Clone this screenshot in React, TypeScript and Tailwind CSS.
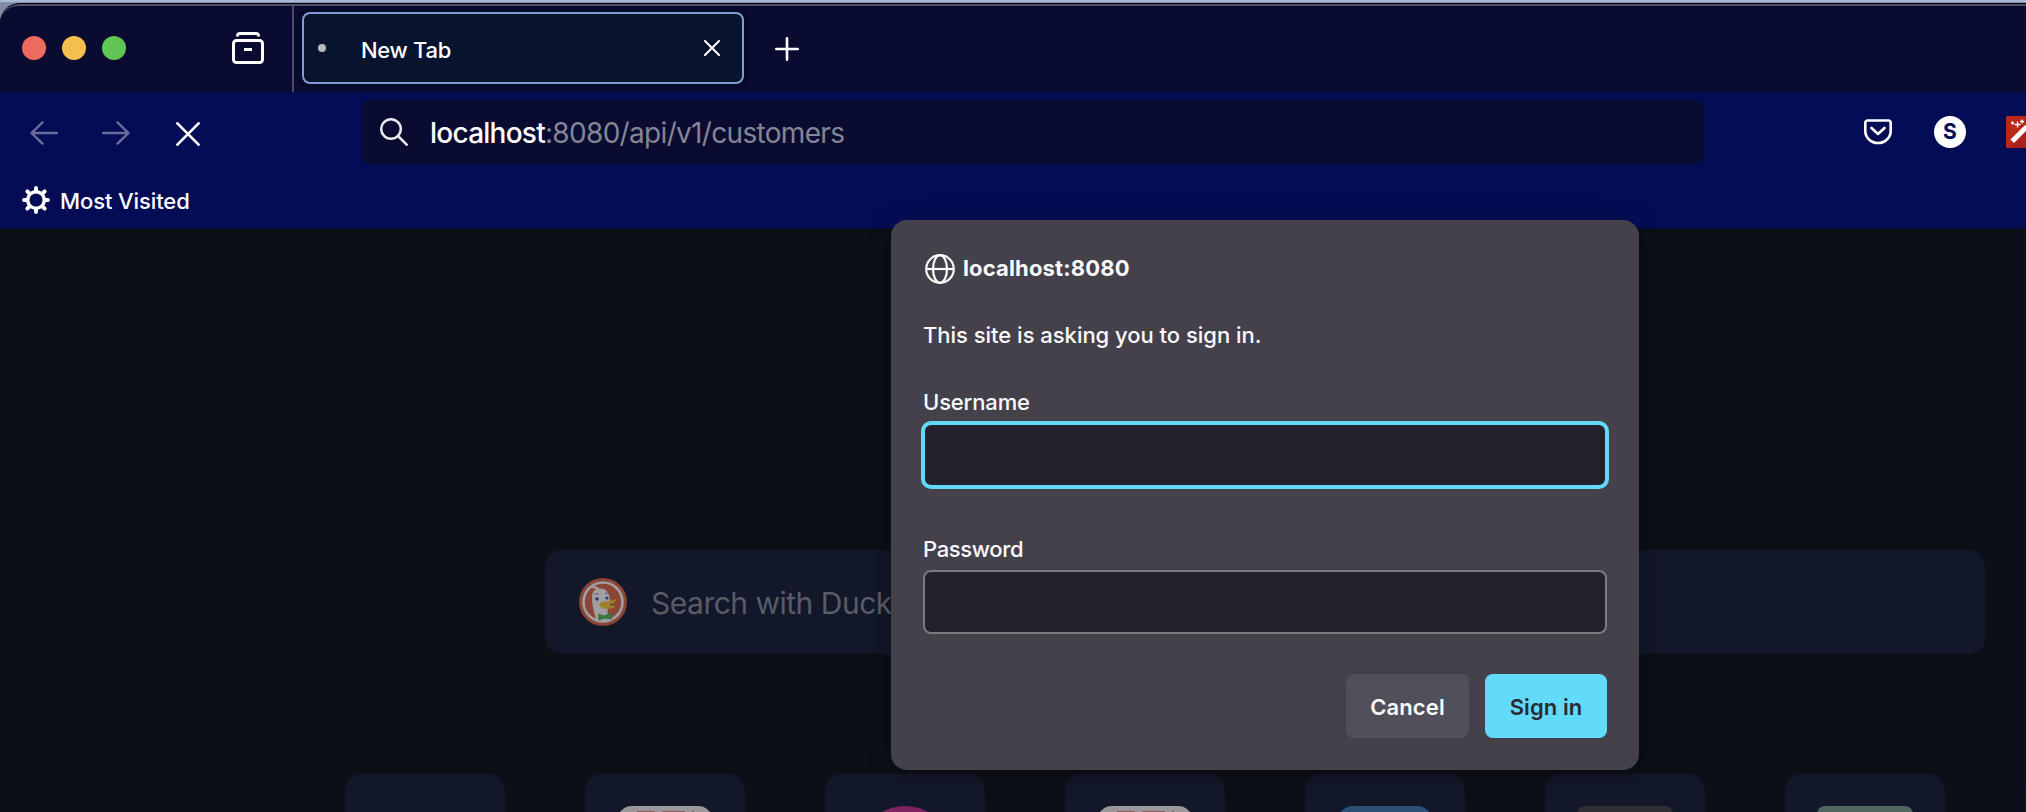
import React from "react";

const tiles = [
  { kind: "none" },
  { kind: "white" },
  { kind: "pink" },
  { kind: "white" },
  { kind: "blue" },
  { kind: "gray" },
  { kind: "green" },
  { kind: "none" },
];

function TileIcon({ kind }: { kind: string }) {
  if (kind === "pink") return <div className="size-24 rounded-full bg-[#7f2260]" />;
  if (kind === "blue") return <div className="size-24 rounded-[16px] bg-[#2b4f75]" />;
  if (kind === "gray") return <div className="size-24 rounded-lg bg-[#303034]" />;
  if (kind === "green") return <div className="size-24 rounded-lg bg-[#526660]" />;
  if (kind === "white")
    return (
      <div className="flex size-24 justify-center gap-[7px] overflow-hidden rounded-[15px] bg-[#999799] pt-[5px]">
        <div className="h-4 w-[18px] bg-[#8c5e5a]" />
        <div className="h-4 w-[23px] bg-[#8c5e5a]" />
        <div className="h-4 w-[2px] bg-[#8c5e5a]" />
      </div>
    );
  return null;
}

function Archive() {
  return (
    <svg className="h-8 w-8" viewBox="0 0 32 32" fill="none" stroke="#fff" strokeWidth="3" strokeLinecap="round">
      <path d="M5.500 3.200C5.700 2 6.500 1.500 8 1.500h16c1.500 0 2.300.5 2.500 1.700" />
      <rect x="1.500" y="8.500" width="29" height="22" rx="3" />
      <path d="M12 17.500h8" strokeLinecap="butt" />
    </svg>
  );
}

function Duck() {
  return (
    <svg className="size-12" viewBox="0 0 48 48">
      <circle cx="24" cy="24" r="24" fill="#8b4534" />
      <circle cx="24" cy="24" r="19.500" fill="#8b4534" stroke="#a29da3" strokeWidth="2.600" />
      <path
        d="M14 8c3 .3 5 1 6 2.500 5-.8 9.500 2.500 10.500 8 .6 3.500.5 5-.5 9-2 3-1.500 6-1 9 .3 3 .5 4 .8 6-4.500 1.500-9 1.200-12.800-.5C15.500 35 13 28 13 20c0-4.500 1-7 4-8.500-1-.8-2-1.500-4-1.600z"
        fill="#a29da3"
      />
      <circle cx="18" cy="21" r="1.800" fill="#2c3a68" />
      <circle cx="28" cy="20" r="1.600" fill="#2c3a68" />
      <path d="M15.500 16.500q2-1.500 4-.5M26 15.500q2-1 3.500 0" stroke="#4a5584" fill="none" />
      <path d="M21 25c4-2.500 9-1 16.500-4-.5 3-4 4.500-9 5.500 2 1 4.500 1.500 8 1.500-2 3.500-9 4-14 1.500-2-1.200-2.500-3-1.500-4.500z" fill="#9c8128" />
      <path d="M19 35.500l6 2 7.500-3 .5 7-7.500-1-6 2z" fill="#397740" />
    </svg>
  );
}

export default function App() {
  return (
    <div className="relative h-[812px] w-[2026px] overflow-hidden bg-[linear-gradient(#a9bad7_0_2px,#8191b0_2px_3px,#7f8ba6_3px)] pt-[3px] font-['Inter',sans-serif] text-white">
      <div className="h-[809px] overflow-hidden rounded-tl-[20px] border-t border-black bg-[#0c0f16]">
        <header className="flex h-[88px] rounded-tl-[19px] border-t-2 border-[#4d4f6c] bg-[#090b30]">
          <div className="flex w-[292px] shrink-0 items-center pb-0.5 pl-[22px]">
            <div className="flex gap-4 pb-px">
              <div className="size-6 rounded-full bg-[#ed6a5f]" />
              <div className="size-6 rounded-full bg-[#f5bf4f]" />
              <div className="size-6 rounded-full bg-[#61c554]" />
            </div>
            <div className="ml-[106px]">
              <Archive />
            </div>
          </div>
          <div className="-mt-0.5 w-0.5 bg-[#4b4c68]" />
          <div className="mt-1.5 ml-2 flex h-[72px] w-[442px] items-center rounded-lg border-2 border-[#809cd6] bg-[#08132e] pr-[22px] pl-[14px] shadow-[0_0_6px_rgba(0,0,0,0.4)]">
            <div className="size-2 rounded-full bg-[#b8bac4]" />
            <span className="ml-[35px] grow pt-1 text-[22px] leading-7 font-medium tracking-[-0.3px]">New Tab</span>
            <svg className="size-4" viewBox="0 0 16 16" stroke="#fff" strokeWidth="2" strokeLinecap="round">
              <path d="M1 1l14 14M15 1L1 15" />
            </svg>
          </div>
          <svg className="mt-[31px] ml-[31px] size-6" viewBox="0 0 24 24" stroke="#fff" strokeWidth="2.600" strokeLinecap="round">
            <path d="M12 1.300v21.400M1.300 12h21.400" />
          </svg>
        </header>

        <nav className="h-[137px] border-b border-[#080b30] bg-[#050c56]">
          <div className="flex h-[80px] items-center">
            <div className="flex w-[362px] shrink-0 items-center pl-[30px]">
              <svg className="mt-0.5 h-6 w-7" viewBox="0 0 28 24" fill="none" stroke="#6a6d9b" strokeWidth="2.400" strokeLinecap="round" strokeLinejoin="round">
                <path d="M12.500 1.300L1.500 12l11 10.700M1.500 12h25.300" />
              </svg>
              <svg className="mt-0.5 ml-11 h-6 w-7" viewBox="0 0 28 24" fill="none" stroke="#6a6d9b" strokeWidth="2.400" strokeLinecap="round" strokeLinejoin="round">
                <path d="M15.500 1.300l11 10.700-11 10.700M26.500 12H1.200" />
              </svg>
              <svg className="mt-1 ml-[46px] size-6" viewBox="0 0 24 24" stroke="#fff" strokeWidth="2.700" strokeLinecap="round">
                <path d="M1.400 1.400l21.200 21.200M22.600 1.400L1.400 22.600" />
              </svg>
            </div>
            <div className="flex h-16 w-[1342px] shrink-0 items-center rounded-lg bg-[#090b30] pl-[18px]">
              <svg className="size-7" viewBox="0 0 28 28" fill="none" stroke="#e9e9f0" strokeWidth="2.500" strokeLinecap="round">
                <circle cx="11" cy="11" r="9.800" />
                <path d="M18 18l8.700 8.700" />
              </svg>
              <span className="ml-[22px] pt-0.5 text-[28px] leading-9 tracking-[-0.68px] text-[#848597]">
                <span className="font-medium tracking-[-0.75px] text-white">localhost</span>:8080/api/v1/customers
              </span>
            </div>
            <svg className="ml-40 h-[26px] w-7 shrink-0" viewBox="0 0 28 26" fill="none" stroke="#fff" strokeWidth="2.600" strokeLinecap="round" strokeLinejoin="round">
              <path d="M3.500 1.500h21a2.200 2.200 0 0 1 2.200 2.200V12a12.700 12 0 0 1-25.400 0V3.700a2.200 2.200 0 0 1 2.200-2.200z" />
              <path d="M7.500 9l6.500 6L20.500 9" />
            </svg>
            <div className="ml-[42px] flex size-8 shrink-0 items-center justify-center rounded-full bg-white pb-px text-[21px] leading-none font-bold text-[#050c56]">
              S
            </div>
            <svg className="ml-10 size-8 shrink-0" viewBox="0 0 32 32">
              <rect width="32" height="32" rx="1.500" fill="#bd271a" />
              <path d="M10 24l16-16 6 6v18H4z" fill="#a92219" />
              <path d="M4.500 23.500L19 9l3.500 3.500L8 27z" fill="#fff" />
              <path d="M11.500 5.500v6M8.500 8.500h6M16 3.500v4M14 5.500h4M6.500 5.500v3M5 7h3" stroke="#fff" strokeWidth="1.300" />
            </svg>
          </div>
          <div className="flex h-14 items-center pl-[22px]">
            <svg className="size-7" viewBox="-14 -14 28 28" fill="none" stroke="#fff" strokeLinecap="round">
              <circle r="8.300" strokeWidth="3.500" />
              <path d="M0-9v-3M0 9v3M-9 0h-3M9 0h3M-6.500-6.500l-2.200-2.200M6.500 6.500l2.200 2.200M-6.500 6.500l-2.200 2.200M6.500-6.500l2.200-2.200" strokeWidth="3.900" />
            </svg>
            <span className="ml-[10px] pt-0.5 text-[22px] leading-7 font-medium tracking-[-0.1px]">Most Visited</span>
          </div>
        </nav>

        <main className="pt-[321px]">
          <div className="ml-[545px] flex h-[104px] w-[1440px] items-center rounded-2xl bg-[#121729] pl-[34px]">
            <Duck />
            <span className="ml-6 pt-0.5 text-[30px] leading-9 tracking-[-0.5px] whitespace-nowrap text-[#595c67]">Search with DuckDuckGo or enter address</span>
          </div>
          <div className="mt-[120px] ml-[345px] flex gap-20">
            {tiles.map((t, i) => (
              <div key={i} className="flex h-40 w-40 shrink-0 justify-center rounded-2xl bg-[#121729] pt-8">
                <TileIcon kind={t.kind} />
              </div>
            ))}
          </div>
        </main>
      </div>

      <section className="absolute top-[220px] left-[891px] flex h-[550px] w-[748px] flex-col rounded-2xl bg-[#44414b] px-8 pt-[34px] text-[22px] leading-7 text-[#fbfbfe] shadow-[0_2px_24px_rgba(0,0,0,0.25)]">
        <div className="flex h-[31px] items-start pl-0.5">
          <svg className="size-[30px]" viewBox="0 0 30 30" fill="none" stroke="#fbfbfe" strokeWidth="2.200">
            <circle cx="15" cy="15" r="13.800" />
            <ellipse cx="15" cy="15" rx="7" ry="13.800" />
            <path d="M1 15h28" />
          </svg>
          <span className="ml-2 font-bold tracking-[0.15px]">localhost:8080</span>
        </div>
        <p className="mt-9 font-[450] tracking-[-0.02px]">This site is asking you to sign in.</p>
        <label className="mt-[39px] font-[450] tracking-[-0.15px]">Username</label>
        <input className="mt-[5px] -ml-0.5 h-[68px] w-[688px] shrink-0 rounded-[10px] border-4 border-[#61dafa] bg-[#23212b] outline-none" />
        <label className="mt-[46px] font-[450] tracking-[-0.35px]">Password</label>
        <input type="password" className="mt-[7px] h-16 w-[684px] shrink-0 rounded-lg border-2 border-[#7c7a80] bg-[#23212b] outline-none" />
        <div className="mt-10 flex justify-end gap-4 font-semibold tracking-[0.1px]">
          <button className="h-16 w-[123px] rounded-lg bg-[#514f59] pt-0.5">Cancel</button>
          <button className="h-16 w-[122px] rounded-lg bg-[#62dbfb] pt-0.5 text-[#2b2a33]">Sign in</button>
        </div>
      </section>
    </div>
  );
}
